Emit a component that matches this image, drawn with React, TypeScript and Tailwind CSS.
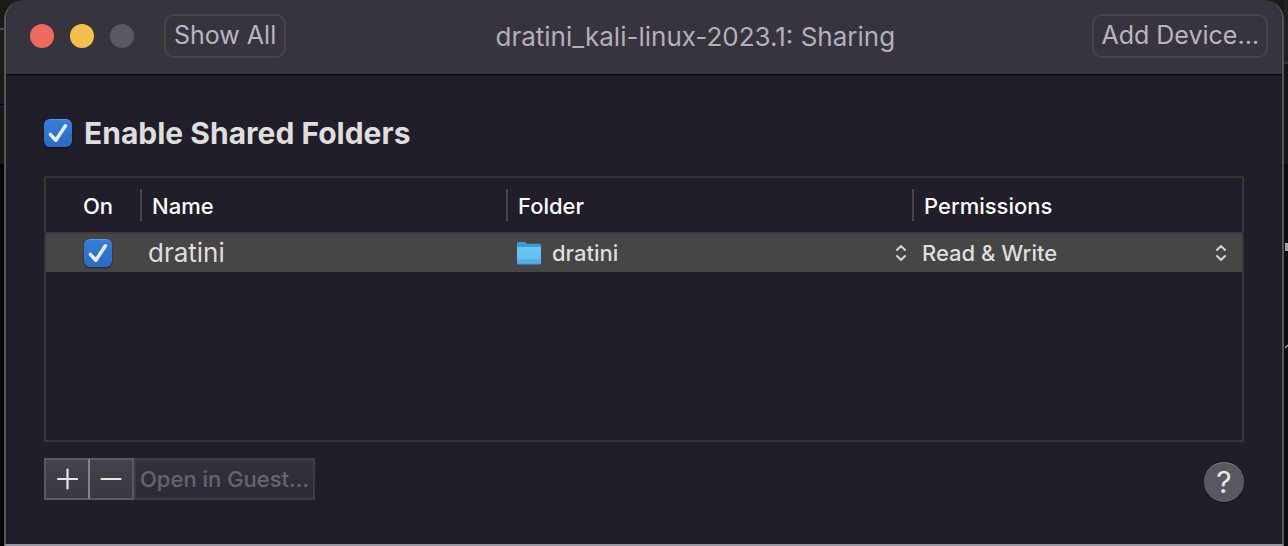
import { useState } from "react";
import type { ReactNode } from "react";

function CheckBox({ id, label }: { id: string; label?: string }) {
  const [on, setOn] = useState(true);
  return (
    <span className="relative inline-flex size-7 shrink-0">
      <input
        id={id}
        type="checkbox"
        aria-label={label}
        checked={on}
        onChange={(e) => setOn(e.target.checked)}
        className="peer size-7 appearance-none rounded-md bg-[#55535d] shadow-[0_1px_2px_rgba(0,0,0,0.5),inset_0_1px_0_rgba(255,255,255,0.2)] checked:bg-linear-to-b checked:from-[#357edd] checked:to-[#2a69c3]"
      />
      <svg
        viewBox="0 0 28 28"
        className="pointer-events-none absolute inset-0 hidden size-7 peer-checked:block"
        fill="none"
        stroke="#e4ecf8"
        strokeWidth="3.6"
        strokeLinecap="round"
        strokeLinejoin="round"
      >
        <path d="M6.4 15.4 11.8 21.2 21.4 6.8" />
      </svg>
    </span>
  );
}

function PopUp({ label, options, children }: { label: string; options: string[]; children?: ReactNode }) {
  return (
    <div className="relative flex items-center">
      {children}
      <select
        aria-label={label}
        className="h-[38px] min-w-0 flex-1 appearance-none bg-transparent text-[22px] font-medium text-[#dededf] outline-none"
      >
        {options.map((o) => (
          <option key={o}>{o}</option>
        ))}
      </select>
      <svg
        viewBox="0 0 12 18"
        className="pointer-events-none h-[18px] w-3 shrink-0"
        fill="none"
        stroke="#cfcfcf"
        strokeWidth="2.1"
        strokeLinecap="round"
        strokeLinejoin="round"
      >
        <path d="M2 6 6 2l4 4M2 12l4 4 4-4" />
      </svg>
    </div>
  );
}

function FolderIcon() {
  return (
    <svg viewBox="0 0 26 26" className="mr-[10px] size-[26px] shrink-0">
      <defs>
        <linearGradient id="front" x1="0" y1="0" x2="0" y2="1">
          <stop offset="0" stopColor="#6cc5f3" />
          <stop offset="0.7" stopColor="#62bdee" />
          <stop offset="1" stopColor="#4ba5dc" />
        </linearGradient>
      </defs>
      <path d="M1.5 24.3h23v.8h-23z" fill="#2f4658" />
      <path d="M1 3.2Q1 2 2.2 2H8.4Q9.2 2 9.8 2.6L11 3.7H23.8Q25 3.7 25 4.9V12H1Z" fill="#3f98d6" />
      <path d="M1 7H25V23.2Q25 24.4 23.8 24.4H2.2Q1 24.4 1 23.2Z" fill="url(#front)" />
      <path d="M1 20.3h24" stroke="#4a9fd2" strokeWidth="0.8" />
    </svg>
  );
}

function HeaderCell({ children }: { children: ReactNode }) {
  return (
    <th scope="col" className="p-0 text-left font-medium">
      <div className="flex h-8 items-center border-l-2 border-[#45434d] pt-[2px] pl-[10px]">{children}</div>
    </th>
  );
}

export default function App() {
  return (
    <div className="flex min-h-screen bg-black font-[Inter,'Liberation_Sans',sans-serif]">
      <div className="flex w-1 shrink-0 flex-col bg-black">
        <div className="h-7 bg-[#1b1b1b]" />
        <div className="h-[76px] border-t-2 border-[#4a4a4a] bg-[#1d1b20]" />
        <div className="h-[60px] border-t border-black bg-[#171714]" />
      </div>

      <div className="flex min-w-0 flex-1 bg-linear-to-b from-[#1c1c1b] from-0% to-black to-30%">
        <div className="flex min-w-0 flex-1 flex-col overflow-hidden rounded-t-[20px] border-x-2 border-b-2 border-x-[#56545c] border-b-[#98969f] bg-[#211e2a]">
          <header className="flex items-center border-b border-black bg-[#38343e] pt-[14px] pr-[14px] pb-4 pl-6">
            <div className="flex gap-4">
              <button aria-label="Close" className="size-6 rounded-full bg-[#ee6a5f]" />
              <button aria-label="Minimize" className="size-6 rounded-full bg-[#f5bf4f]" />
              <button aria-label="Zoom" disabled className="size-6 rounded-full bg-[#5b5862]" />
            </div>
            <button className="ml-[30px] h-11 rounded-[10px] border-2 border-[#46434d] px-2 pb-[2px] text-[25px] leading-none text-[#b8b4c1]">
              Show All
            </button>
            <h1 className="flex-1 pt-[2px] pl-3 text-center text-[26px] leading-none text-[#b3afbc]">
              dratini_kali-linux-2023.1: Sharing
            </h1>
            <button className="h-11 rounded-[10px] border-2 border-[#46434d] px-[7px] pb-[2px] text-[25px] leading-none text-[#b8b4c1]">
              Add Device…
            </button>
          </header>

          <main className="flex flex-1 flex-col px-[38px] pt-10 pb-[42px]">
            <div className="flex h-9 items-center gap-3">
              <CheckBox id="enable" />
              <label htmlFor="enable" className="text-[30px] leading-9 font-bold text-[#dededf]">
                Enable Shared Folders
              </label>
            </div>

            <div className="mt-[25px] min-h-[180px] flex-1 border-2 border-[#363535]">
              <table className="w-full table-fixed border-collapse">
                <colgroup>
                  <col className="w-[94px]" />
                  <col className="w-[366px]" />
                  <col className="w-[406px]" />
                  <col />
                </colgroup>
                <thead>
                  <tr className="h-[55px] border-b-2 border-[#3d3a46] text-[22px] text-white">
                    <th scope="col" className="p-0 pt-[2px] pl-[10px] text-center font-medium">
                      On
                    </th>
                    <HeaderCell>Name</HeaderCell>
                    <HeaderCell>Folder</HeaderCell>
                    <HeaderCell>Permissions</HeaderCell>
                  </tr>
                </thead>
                <tbody>
                  <tr className="h-[38px] bg-[#464646] text-[#dededf]">
                    <td className="p-0 pl-[10px]">
                      <div className="flex justify-center">
                        <CheckBox id="row-on" label="Share dratini" />
                      </div>
                    </td>
                    <td className="p-0 pl-2 text-[26px] leading-8">dratini</td>
                    <td className="p-0 pr-[5px] pl-[10px]">
                      <PopUp label="Folder" options={["dratini"]}>
                        <FolderIcon />
                      </PopUp>
                    </td>
                    <td className="p-0 pr-[15px] pl-[10px]">
                      <PopUp label="Permissions" options={["Read & Write", "Read Only"]} />
                    </td>
                  </tr>
                </tbody>
              </table>
            </div>

            <div className="mt-4 flex items-start justify-between">
              <div className="flex h-[42px]">
                <button
                  aria-label="Add folder"
                  className="flex w-[46px] items-center justify-center border-2 border-[#5a5861] border-r-[#85838b] bg-linear-to-b from-[#45424c] to-[#3b3843]"
                >
                  <svg viewBox="0 0 22 22" className="size-[22px]" stroke="#e6e6e8" strokeWidth="2.2" strokeLinecap="round">
                    <path d="M11.5 1.5v19M2 11h19" />
                  </svg>
                </button>
                <button
                  aria-label="Remove folder"
                  className="flex w-11 items-center justify-center border-2 border-l-0 border-[#5a5861] bg-linear-to-b from-[#45424c] to-[#3b3843]"
                >
                  <svg viewBox="0 0 22 22" className="size-[22px]" stroke="#e6e6e8" strokeWidth="2.2" strokeLinecap="round">
                    <path d="M1.5 11h19" />
                  </svg>
                </button>
                <button
                  disabled
                  className="border-2 border-[#3e3b46] bg-linear-to-b from-[#35323d] to-[#2d2a36] px-1 text-[22px] leading-none font-medium text-[#66646d]"
                >
                  Open in Guest…
                </button>
              </div>
              <button
                aria-label="Help"
                className="mt-1 size-10 rounded-full bg-[#5a5761] text-[30px] leading-none text-[#e8e8ea] shadow-[inset_0_1px_0_rgba(255,255,255,0.2),0_1px_1px_rgba(0,0,0,0.4)]"
              >
                ?
              </button>
            </div>
          </main>
        </div>
      </div>

      <div className="flex w-1 shrink-0 flex-col bg-[#0c0c0c]">
        <div className="h-[62px] bg-[#22211f]" />
        <div className="h-[102px] border-t-2 border-[#34332f] bg-[#171613]" />
        <div className="mt-[79px] ml-px h-2 bg-[#a3a3a3]" />
        <svg viewBox="0 0 3 6" className="mt-[92px] ml-px h-[6px] w-[3px]" stroke="#a3a3a3" strokeWidth="1.5">
          <path d="M0 5 3 2" />
        </svg>
      </div>
    </div>
  );
}
